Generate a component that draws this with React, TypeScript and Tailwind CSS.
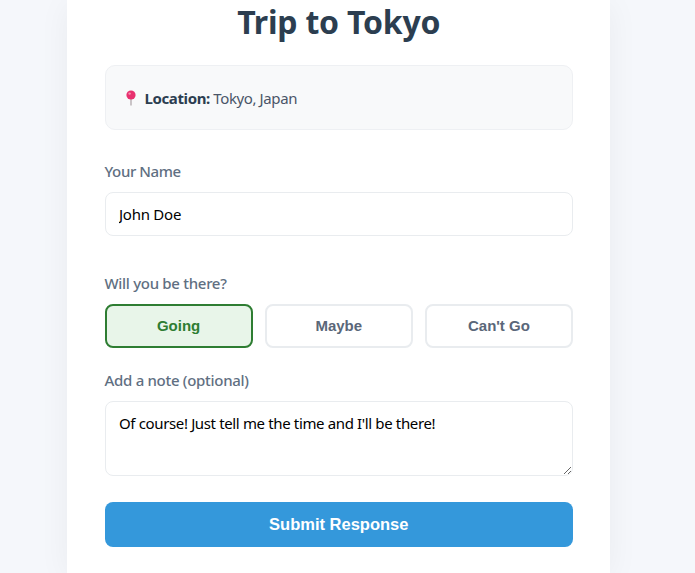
export default function App() {
  const sans = "font-['Noto_Sans','Open_Sans',sans-serif]";
  return (
    <div className={`h-[573px] w-[695px] overflow-hidden bg-[#f5f7fb] ${sans}`}>
      <div className="ml-[67px] h-[573px] w-[543px] bg-white pl-[37.5px] pr-[37px] shadow-[0_4px_30px_rgba(0,0,0,0.05)]">
        <h1 className="m-0 h-[65px] pt-[1px] text-center text-[32px] font-bold leading-[42px] tracking-[-0.2px] text-[#2c3e50]">Trip to Tokyo</h1>
        <div className="flex h-[65px] items-center rounded-[10px] border border-[#eef0f3] bg-[#f8f9fa] pl-[18px] pt-[1px] text-[15px] tracking-[-0.39px] text-[#4a5568]">
          <svg width="14" height="16" viewBox="0 0 14 16" className="mr-[7px] shrink-0">
            <line x1="7" y1="8" x2="7" y2="15.5" stroke="#b0a8ac" strokeWidth="1.3" />
            <circle cx="7" cy="5" r="4.6" fill="#e8316f" />
            <circle cx="5.6" cy="3.6" r="1.2" fill="#f78fb0" />
          </svg>
          <span><strong className="font-bold text-[#2c3e50]">Location:</strong> Tokyo, Japan</span>
        </div>
        <label className="mt-[31px] block text-[15px] font-medium leading-[20px] tracking-[-0.4px] text-[#5f6f82]">Your Name</label>
        <input readOnly value="John Doe" className="mt-[11px] box-border block h-[43.5px] w-full rounded-[8px] border border-[#e9ecef] bg-white px-[13.5px] text-[15px] tracking-[-0.25px] text-black outline-none" />
        <label className="mt-[37.5px] block text-[15px] font-medium leading-[20px] tracking-[-0.3px] text-[#5f6f82]">Will you be there?</label>
        <div className="mt-[11px] grid grid-cols-3 gap-[12px] font-['Liberation_Sans',sans-serif] text-[15px] font-bold">
          <button className="h-[44px] rounded-[8px] border-2 border-[#2e7d32] bg-[#e8f5e9] text-[#2e7d32]">Going</button>
          <button className="h-[44px] rounded-[8px] border-2 border-[#e9ecef] bg-white text-[#5a6779]">Maybe</button>
          <button className="h-[44px] rounded-[8px] border-2 border-[#e9ecef] bg-white text-[#5a6779]">Can't Go</button>
        </div>
        <label className="mt-[22px] block text-[15px] font-medium leading-[20px] tracking-[-0.3px] text-[#5f6f82]">Add a note (optional)</label>
        <textarea readOnly value="Of course! Just tell me the time and I'll be there!" className="mt-[11px] box-border block h-[75px] w-full rounded-[8px] border border-[#e9ecef] bg-white px-[13.5px] py-[10px] text-[15px] leading-[22px] tracking-[-0.36px] text-black outline-none" />
        <button className="mt-[26px] block h-[45px] w-full rounded-[8px] bg-[#3498db] font-['Liberation_Sans',sans-serif] text-[16.5px] font-bold text-white">Submit Response</button>
      </div>
    </div>
  );
}
